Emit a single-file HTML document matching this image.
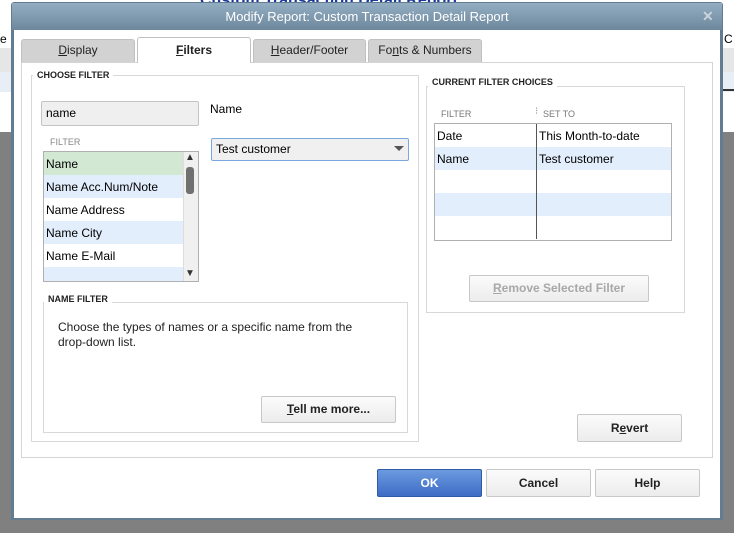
<!DOCTYPE html>
<html><head><style>
*{margin:0;padding:0;box-sizing:border-box}
body{width:734px;height:533px;overflow:hidden;position:relative;background:#fff;font-family:"Liberation Sans",Arial,sans-serif;font-size:12px;color:#000}
.a{position:absolute}
.btn{position:absolute;border:1px solid #c8c8c8;border-radius:2px;background:linear-gradient(#fbfbfb,#ececec);text-align:center;color:#222;font-size:12px;font-weight:bold}
.lbl{font-size:9px;font-weight:bold;color:#222;background:#fff;padding:0 4px}
.tab{position:absolute;top:39px;height:23px;background:#d2d2d2;border:1px solid #c0c0c0;border-bottom:none;border-radius:3px 3px 0 0;text-align:center;line-height:21px;font-size:12px;color:#222}
.row{height:23px;line-height:24px;padding-left:2px}
</style></head><body>
<!-- background report -->
<div class="a" style="left:200px;top:-8px;width:300px;font-size:16px;font-weight:bold;color:#1a3a9a;text-decoration:underline">Custom Transaction Detail Report</div>
<div class="a" style="left:0;top:48px;width:734px;height:24px;background:#e6e6e6"></div>
<div class="a" style="left:0;top:72px;width:734px;height:20px;background:#e8eef6"></div>
<div class="a" style="left:0;top:132px;width:734px;height:401px;background:#808080"></div>
<div class="a" style="left:0;top:32px;font-size:12px">e</div>
<div class="a" style="left:724px;top:32px;font-size:12px">C</div>
<div class="a" style="left:722px;top:89px;width:12px;height:2px;border-top:1px solid #333;border-bottom:1px solid #333"></div>
<!-- dialog -->
<div class="a" style="left:11px;top:2px;width:712px;height:518px;background:#627d92;border-radius:3px 3px 0 0"></div>
<div class="a" style="left:12px;top:3px;width:710px;height:27px;background:linear-gradient(#93adc2,#6d879c);color:#fff;text-align:center;line-height:27px;font-size:13px">Modify Report: Custom Transaction Detail Report</div>
<div class="a" style="left:702px;top:8px;color:#c9d4dd;font-size:14px;font-weight:bold">✕</div>
<div class="a" style="left:14px;top:30px;width:706px;height:488px;background:#fff"></div>
<!-- tabs -->
<div class="tab" style="left:21px;width:114px"><u>D</u>isplay</div>
<div class="tab" style="left:137px;top:37px;width:114px;height:26px;background:#fff;font-weight:bold;line-height:24px;z-index:2"><u>F</u>ilters</div>
<div class="tab" style="left:253px;width:113px"><u>H</u>eader/Footer</div>
<div class="tab" style="left:368px;width:114px">Fo<u>n</u>ts &amp; Numbers</div>
<div class="a" style="left:21px;top:62px;width:692px;height:396px;border:1px solid #d4d4d4"></div>
<!-- choose filter -->
<div class="a" style="left:31px;top:75px;width:388px;height:367px;border:1px solid #d8d8d8"></div>
<div class="a lbl" style="left:33px;top:70px">CHOOSE FILTER</div>
<div class="a" style="left:41px;top:101px;width:158px;height:25px;background:#efefef;border:1px solid #c4c4c4;border-radius:2px;line-height:23px;padding-left:4px;font-size:12px">name</div>
<div class="a" style="left:210px;top:102px;font-size:12px">Name</div>
<div class="a" style="left:50px;top:137px;font-size:9px;color:#888">FILTER</div>
<div class="a" style="left:43px;top:151px;width:156px;height:131px;border:1px solid #b0b0b0;background:#e3eefc;overflow:hidden">
<div class="row" style="background:#d3e8d3">Name</div>
<div class="row" style="background:#e3eefc">Name Acc.Num/Note</div>
<div class="row" style="background:#fff">Name Address</div>
<div class="row" style="background:#e3eefc">Name City</div>
<div class="row" style="background:#fff">Name E-Mail</div>
</div>
<div class="a" style="left:183px;top:152px;width:15px;height:129px;background:#f0f0f0;border-left:1px solid #ddd"></div>
<div class="a" style="left:185px;top:152px;font-size:10px;color:#333">▲</div>
<div class="a" style="left:185px;top:268px;font-size:10px;color:#333">▼</div>
<div class="a" style="left:186px;top:167px;width:8px;height:27px;background:#707070;border-radius:3px"></div>
<div class="a" style="left:211px;top:138px;width:198px;height:23px;background:#f0f0f0;border:1px solid #7aa7e0;border-radius:2px;line-height:21px;padding-left:4px;font-size:12px">Test customer</div>
<div class="a" style="left:394px;top:146px;width:0;height:0;border-left:5px solid transparent;border-right:5px solid transparent;border-top:5px solid #555"></div>
<!-- name filter -->
<div class="a" style="left:43px;top:302px;width:365px;height:131px;border:1px solid #d8d8d8"></div>
<div class="a lbl" style="left:44px;top:294px">NAME FILTER</div>
<div class="a" style="left:58px;top:320px;width:310px;font-size:12px;line-height:15px;color:#222">Choose the types of names or a specific name from the drop&#8209;down list.</div>
<div class="btn" style="left:261px;top:396px;width:135px;height:27px;line-height:25px"><u>T</u>ell me more...</div>
<!-- current filters -->
<div class="a" style="left:426px;top:86px;width:259px;height:227px;border:1px solid #d8d8d8"></div>
<div class="a lbl" style="left:428px;top:77px">CURRENT FILTER CHOICES</div>
<div class="a" style="left:441px;top:109px;font-size:9px;color:#777">FILTER</div>
<div class="a" style="left:535px;top:106px;font-size:10px;color:#999">⁝</div>
<div class="a" style="left:543px;top:109px;font-size:9px;color:#777">SET TO</div>
<div class="a" style="left:434px;top:123px;width:238px;height:118px;border:1px solid #b0b0b0;background:#fff">
<div style="height:23px;line-height:24px;background:#fff;position:relative"><span style="padding-left:2px">Date</span><span class="a" style="left:104px">This Month-to-date</span></div>
<div style="height:23px;line-height:24px;background:#e3eefc;position:relative"><span style="padding-left:2px">Name</span><span class="a" style="left:104px">Test customer</span></div>
<div style="height:23px"></div>
<div style="height:23px;background:#e3eefc"></div>
</div>
<div class="a" style="left:536px;top:124px;width:1px;height:115px;background:#555"></div>
<div class="btn" style="left:469px;top:275px;width:180px;height:27px;line-height:25px;color:#a8a8a8"><u>R</u>emove Selected Filter</div>
<div class="btn" style="left:577px;top:414px;width:105px;height:28px;line-height:26px">R<u>e</u>vert</div>
<!-- bottom buttons -->
<div class="btn" style="left:377px;top:469px;width:105px;height:28px;line-height:26px;background:linear-gradient(#6b9ae0,#3e6cc6);border-color:#2f5aa8;color:#fff">OK</div>
<div class="btn" style="left:486px;top:469px;width:105px;height:28px;line-height:26px">Cancel</div>
<div class="btn" style="left:595px;top:469px;width:105px;height:28px;line-height:26px">Help</div>
</body></html>
